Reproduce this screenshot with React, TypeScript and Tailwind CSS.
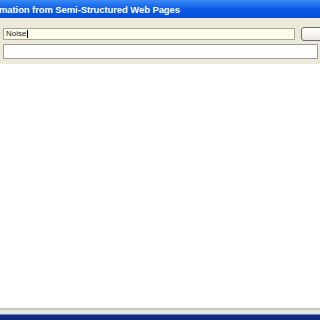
import React from "react";

export default function App() {
  return (
    <div className="w-[320px] h-[320px] overflow-hidden flex flex-col bg-[#ece9d8]" style={{ fontFamily: "'Liberation Sans', Arial, sans-serif" }}>
      <div className="h-[18px] shrink-0 flex items-center bg-gradient-to-b from-[#3b8cf5] via-[#0a5ae6] to-[#0550d8]">
        <span className="text-white font-bold text-[9.5px] leading-none whitespace-nowrap ml-[-1px] pt-[1px] tracking-[-0.1px]">
          mation from Semi-Structured Web Pages
        </span>
      </div>
      <div className="shrink-0 pt-[9px] pl-[3px] flex flex-col gap-[3px]">
        <div className="flex items-center gap-[6px]">
          <div className="shrink-0 w-[292px] h-[12px] border border-[#a5a5a0] bg-[#fffce8] flex items-center pl-[2px]">
            <span className="text-[8px] leading-none text-[#222]">Noise</span>
            <span className="w-px h-[8px] bg-black ml-[1px]" />
          </div>
          <div className="shrink-0 w-[30px] h-[14px] rounded-[3px] border border-[#6f6f6f] bg-gradient-to-b from-white to-[#ece9e0]" />
        </div>
        <div className="shrink-0 w-[315px] h-[15px] border border-[#9c9c98] bg-white" />
      </div>
      <div className="h-[5px] shrink-0" />
      <div className="flex-1 bg-white" />
      <div className="h-[2px] shrink-0 bg-[#c6c6c2]" />
      <div className="h-[4px] shrink-0 bg-[#e3e8de]" />
      <div className="h-px shrink-0 bg-[#6b7fc4]" />
      <div className="h-[5px] shrink-0 bg-[#102a7c]" />
    </div>
  );
}
